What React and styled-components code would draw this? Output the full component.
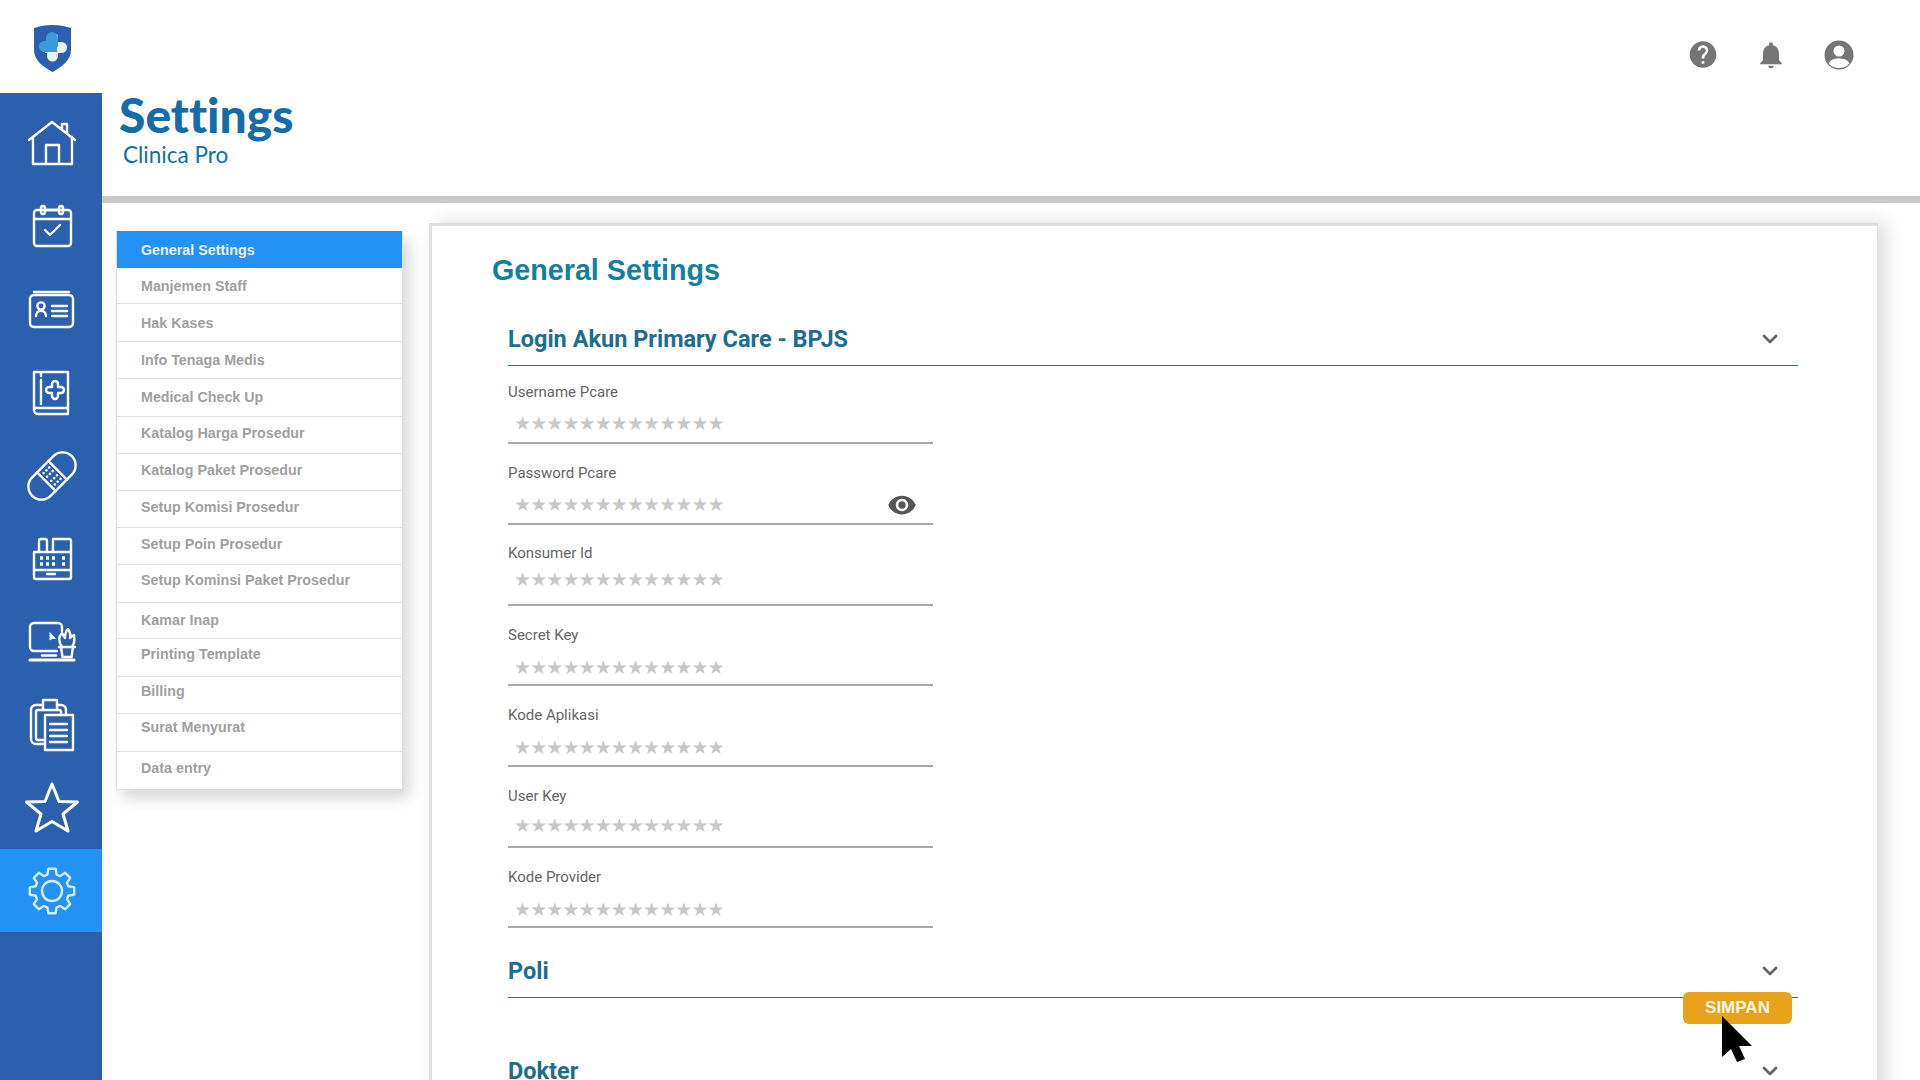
import React from "react";
import styled, { createGlobalStyle } from "styled-components";
import { MdHelp, MdNotifications, MdVisibility } from "react-icons/md";

const GlobalStyle = createGlobalStyle`
  html, body {
    margin: 0;
    padding: 0;
    height: 1080px;
    overflow: hidden;
    background: #ffffff;
  }
  * { box-sizing: border-box; }
`;

const Page = styled.div`
  position: relative;
  width: 1920px;
  height: 1080px;
  overflow: hidden;
  display: flex;
  flex-direction: column;
  font-family: "Liberation Sans", Arial, sans-serif;
`;

const TopBar = styled.header`
  height: 93px;
  flex: none;
  display: flex;
  align-items: center;
  justify-content: space-between;
  padding: 0 65px 0 34px;
`;

const LogoMark = styled.svg`
  width: 37px;
  height: 47px;
  display: block;
  margin-top: 4px;
`;

const TopIcons = styled.div`
  display: flex;
  align-items: center;
  gap: 36px;
  color: #757575;
  padding-top: 16px;
`;

const TopIcon = styled.span`
  width: 32px;
  height: 32px;
  display: flex;
  align-items: center;
  justify-content: center;
`;

const Body = styled.div`
  flex: 1;
  display: flex;
  min-height: 0;
`;

const Sidebar = styled.nav`
  width: 102px;
  flex: none;
  background: #2a60ae;
  padding-top: 9px;
`;

const NavItem = styled.div`
  height: 83px;
  display: flex;
  align-items: center;
  justify-content: center;
  padding: 1px 0 0 1px;
  background: ${(p) => (p.$active ? "#2491f5" : "transparent")};
`;

const NavSvg = styled.svg.attrs({ viewBox: "0 0 64 64" })`
  width: 64px;
  height: 64px;
  display: block;
  fill: none;
  stroke: ${(p) => p.$tint || "#ffffff"};
  stroke-width: 2.4;
  stroke-linejoin: round;
  stroke-linecap: round;
`;

const Main = styled.main`
  flex: 1;
  min-width: 0;
  display: flex;
  flex-direction: column;
`;

const PageHead = styled.div`
  height: 103px;
  flex: none;
  padding: 0 0 0 17px;
`;

const PageTitle = styled.h1`
  margin: -2px 0 0;
  font-family: Lato, sans-serif;
  font-weight: 900;
  font-size: 48px;
  line-height: 48px;
  font-variant-ligatures: none;
  color: #156ca8;
`;

const PageSub = styled.div`
  margin: 3px 0 0 4px;
  font-family: Lato, sans-serif;
  font-weight: 400;
  font-size: 22.5px;
  line-height: 26px;
  color: #156ca8;
`;

const Rule = styled.div`
  height: 7px;
  flex: none;
  background: #c9c9c9;
`;

const Content = styled.div`
  flex: 1;
  min-height: 0;
  display: flex;
  align-items: flex-start;
  padding: 20px 0 0 14px;
  gap: 26px;
`;

const Menu = styled.ul`
  width: 287px;
  flex: none;
  margin: 8px 0 0;
  padding: 0;
  list-style: none;
  border: 1px solid #dedede;
  border-top: none;
  box-shadow: 6px 8px 14px rgba(0, 0, 0, 0.16);
  background: #ffffff;
`;

const MenuItem = styled.li`
  height: ${(p) => p.$h || 37}px;
  padding: 0 0 ${(p) => p.$lift || 0}px 24px;
  display: flex;
  align-items: center;
  font-size: 14.3px;
  font-weight: 700;
  color: ${(p) => (p.$active ? "#e9f4ff" : "#a0a0a0")};
  background: ${(p) => (p.$active ? "#2491f5" : "transparent")};
  border-bottom: ${(p) => (p.$active || p.$last ? "none" : "1px solid #e2e2e2")};
`;

const Panel = styled.section`
  width: 1449px;
  height: 900px;
  flex: none;
  padding: 24px 79px 0 60px;
  border: 3px solid #e0e0e0;
  border-right: 1px solid #e0e0e0;
  border-bottom: none;
  box-shadow: 8px 0 18px rgba(0, 0, 0, 0.14);
  background: #ffffff;
`;

const PanelTitle = styled.h2`
  margin: 0;
  font-size: 28.7px;
  line-height: 40px;
  font-weight: 700;
  color: #12809e;
`;

const Section = styled.div`
  margin: ${(p) => p.$top}px 0 0 16px;
`;

const SectionHead = styled.div`
  height: 53px;
  display: flex;
  align-items: center;
  justify-content: space-between;
  padding-right: 20px;
  border-bottom: 1px solid #2a6f94;
  font-family: Roboto, sans-serif;
  font-size: 23.5px;
  font-weight: 700;
  color: #1d6d91;
`;

const Chevron = styled.svg.attrs({ viewBox: "0 0 16 10" })`
  width: 16px;
  height: 10px;
  fill: none;
  stroke: #666666;
  stroke-width: 2.8;
  stroke-linecap: round;
  stroke-linejoin: round;
`;

const Field = styled.div`
  position: relative;
  width: 425px;
  height: ${(p) => p.$h || 81}px;
  display: flex;
  flex-direction: column;
  justify-content: space-between;
  padding-top: ${(p) => p.$pad || 19}px;
  border-bottom: 2px solid #a8a8a8;
`;

const Label = styled.label`
  font-family: Roboto, sans-serif;
  font-size: 15px;
  line-height: 20px;
  color: #666666;
`;

const Mask = styled.div`
  font-family: "DejaVu Sans", sans-serif;
  font-size: 19px;
  line-height: 20px;
  letter-spacing: -0.9px;
  padding: 0 0 ${(p) => p.$up}px 6px;
  color: #c8c8c8;
  white-space: nowrap;
`;

const EyeButton = styled.span`
  position: absolute;
  right: 16px;
  bottom: 3px;
  display: flex;
  color: #555555;
`;

const SaveButton = styled.button`
  position: absolute;
  left: 1683px;
  top: 992px;
  width: 109px;
  height: 32px;
  border: none;
  border-radius: 6px;
  background: #e8a21c;
  color: #fff7e6;
  font-family: "Liberation Sans", Arial, sans-serif;
  font-size: 17px;
  font-weight: 700;
`;

const Pointer = styled.svg`
  position: absolute;
  left: 1720px;
  top: 1015px;
  width: 36px;
  height: 48px;
`;

const menuItems = [
  { label: "General Settings", active: true },
  { label: "Manjemen Staff", h: 36 },
  { label: "Hak Kases", h: 38 },
  { label: "Info Tenaga Medis" },
  { label: "Medical Check Up", h: 38, lift: 2 },
  { label: "Katalog Harga Prosedur", lift: 4 },
  { label: "Katalog Paket Prosedur", lift: 5 },
  { label: "Setup Komisi Prosedur", lift: 5 },
  { label: "Setup Poin Prosedur", lift: 5 },
  { label: "Setup Kominsi Paket Prosedur", h: 38, lift: 8 },
  { label: "Kamar Inap", h: 36, lift: 2 },
  { label: "Printing Template", h: 38, lift: 8 },
  { label: "Billing", lift: 9 },
  { label: "Surat Menyurat", h: 38, lift: 12 },
  { label: "Data entry", last: true, lift: 5 },
];

const fields = [
  { label: "Username Pcare", h: 78, pad: 16, up: 9 },
  { label: "Password Pcare", up: 9, eye: true },
  { label: "Konsumer Id", pad: 18, up: 15 },
  { label: "Secret Key", h: 80, up: 7 },
  { label: "Kode Aplikasi", h: 81, up: 8 },
  { label: "User Key", up: 11 },
  { label: "Kode Provider", h: 80, up: 7 },
];

const stars = "★★★★★★★★★★★★★";

function gearPath(cx, cy) {
  const teeth = 8;
  const pts = [];
  for (let i = 0; i < teeth; i++) {
    const a = (i * 2 * Math.PI) / teeth - Math.PI / 2;
    const step = (2 * Math.PI) / teeth;
    [[-0.3, 17], [-0.17, 22.5], [0.17, 22.5], [0.3, 17]].forEach(([t, r]) => {
      const b = a + t * step * 1.2;
      pts.push(`${(cx + r * Math.cos(b)).toFixed(1)} ${(cy + r * Math.sin(b)).toFixed(1)}`);
    });
  }
  return "M" + pts.join("L") + "Z";
}

const navIcons = [
  <NavSvg key="home">
    <path d="M9 28 32 10l23 18M13 25v27h39V25M26 52V33h13v19M42 17v-5h5v9" />
  </NavSvg>,
  <NavSvg key="calendar">
    <rect x="14" y="15" width="37" height="36" rx="3" />
    <path d="M14 24h37M26 15h12" />
    <rect x="21" y="11" width="4" height="8" rx="2" />
    <rect x="39" y="11" width="4" height="8" rx="2" />
    <path d="m25 35 5 5 10-10" />
  </NavSvg>,
  <NavSvg key="card">
    <rect x="10" y="17" width="43" height="32" rx="4" />
    <path d="M14 14h35" />
    <circle cx="21" cy="28" r="3.6" />
    <path d="M16 38c0-7 10-7 10 0M32 28h15M32 33h15M32 38h15" />
  </NavSvg>,
  <NavSvg key="book">
    <path d="M48 11H14v38a4 4 0 0 0 4 4h30zM48 47H18a3 3 0 0 0-4 2M21 11v4M21 19v24" />
    <path d="M32 23a3 3 0 0 1 6 0v3h3a3 3 0 0 1 0 6h-3v3a3 3 0 0 1-6 0v-3h-3a3 3 0 0 1 0-6h3z" />
  </NavSvg>,
  <NavSvg key="bandage">
    <g transform="rotate(-45 32 32)">
      <rect x="4" y="19" width="56" height="26" rx="13" />
      <path d="M24 19v26M40 19v26" />
      <path d="M28 24h.1M32 24h.1M36 24h.1M28 29h.1M32 29h.1M36 29h.1M28 35h.1M32 35h.1M36 35h.1M28 40h.1M32 40h.1M36 40h.1" strokeWidth="2.6" />
    </g>
  </NavSvg>,
  <NavSvg key="register">
    <path d="M14 25h37v25a2 2 0 0 1-2 2H16a2 2 0 0 1-2-2zM14 43h37M27 47h8" />
    <path d="M19 25v-11a2 2 0 0 1 2-2h4a2 2 0 0 1 2 2v11M33 25v-13h16a2 2 0 0 1 2 2v11" />
    <path d="M20 31h3M26 31h3M32 31h3M42 31h3M20 37h3M26 37h3M32 37h3M42 37h3" strokeWidth="3.6" strokeLinecap="butt" />
  </NavSvg>,
  <NavSvg key="laptop">
    <path d="M37 41H14a4 4 0 0 1-4-4V17a4 4 0 0 1 4-4h24a4 4 0 0 1 4 4v4" />
    <path d="M10 50h44" strokeWidth="3.2" />
    <path d="M22 45.500h14" />
    <path d="M39 37h16M41 37l1.500 10h9l1.500-10" />
    <path d="M42 37c-4-6-3-11 0-14 1 2 2 3 3 5 0-5 2-8 3-9 2 3 3 6 2 9 1-1 2-2 4-3 1 5 0 9-2 12" />
    <path d="m30 23 0 7 2-1.500 3 0z" fill="#ffffff" strokeWidth="1" />
  </NavSvg>,
  <NavSvg key="clipboard">
    <path d="M25 51h-9a5 5 0 0 1-5-5V17a5 5 0 0 1 5-5h7M37 12h4a5 5 0 0 1 5 5v5" />
    <path d="M25 47h-7a2 2 0 0 1-2-2V19a2 2 0 0 1 2-2h5M37 17h2a2 2 0 0 1 2 2v3" />
    <rect x="23" y="7" width="14" height="10" />
    <rect x="25" y="22" width="28" height="35" />
    <path d="M30 31h17M30 37h17M30 43h17M30 49h17" />
  </NavSvg>,
  <NavSvg key="star" style={{ strokeWidth: 3 }}>
    <path d="m32 8 7 17.500 18.500 .5-14.500 12 5 17-16-9.500-16 9.500 5-17L6.500 26l18.500-.5z" />
  </NavSvg>,
  <NavSvg key="gear" $tint="#d6ecff">
    <path d={gearPath(32, 32)} />
    <circle cx="32" cy="32" r="10" />
  </NavSvg>,
];

function SectionTitle({ children, top }) {
  return (
    <Section $top={top}>
      <SectionHead>
        {children}
        <Chevron>
          <path d="m2 2 6 6 6-6" />
        </Chevron>
      </SectionHead>
    </Section>
  );
}

export default function App() {
  return (
    <Page>
      <GlobalStyle />
      <TopBar>
        <LogoMark viewBox="0 0 37 47">
          <path d="M0 3C6 1 12 0 18.500 0S31 1 37 3v22c0 10-9 17-18.500 22C9 42 0 35 0 25z" fill="#2a60ae" />
          <path d="M11 20h7V9h5a6 6 0 0 1 1 5v3h3.500a5.500 5.500 0 0 1 0 11H24v3a5.500 5.500 0 0 1-11 0v-3h-2z" fill="#e8f0f8" />
          <path d="M12 16v-3a6 6 0 0 1 12 0v9h-1v5H10.500a5.500 5.500 0 0 1 0-11z" fill="#3d9ad8" />
        </LogoMark>
        <TopIcons>
          <TopIcon><MdHelp size={37} /></TopIcon>
          <TopIcon><MdNotifications size={38} /></TopIcon>
          <TopIcon>
            <svg width="30" height="30" viewBox="0 0 30 30">
              <circle cx="15" cy="15" r="14.500" fill="#757575" />
              <circle cx="15" cy="11" r="5.500" fill="#ffffff" />
              <path d="M4.500 23.500C7 19 11 18.500 15 18.500s8 .5 10.500 5C23 26.500 19 28 15 28s-8-1.500-10.500-4.500z" fill="#ffffff" />
            </svg>
          </TopIcon>
        </TopIcons>
      </TopBar>
      <Body>
        <Sidebar>
          {navIcons.map((icon, i) => (
            <NavItem key={i} $active={i === 9}>{icon}</NavItem>
          ))}
        </Sidebar>
        <Main>
          <PageHead>
            <PageTitle>Settings</PageTitle>
            <PageSub>Clinica Pro</PageSub>
          </PageHead>
          <Rule />
          <Content>
            <Menu>
              {menuItems.map((item) => (
                <MenuItem
                  key={item.label}
                  $active={item.active}
                  $last={item.last}
                  $h={item.h}
                  $lift={item.lift}
                >
                  {item.label}
                </MenuItem>
              ))}
            </Menu>
            <Panel>
              <PanelTitle>General Settings</PanelTitle>
              <SectionTitle top={23}>Login Akun Primary Care - BPJS</SectionTitle>
              <Section $top={0}>
                {fields.map((f) => (
                  <Field key={f.label} $h={f.h} $pad={f.pad}>
                    <Label>{f.label}</Label>
                    <Mask $up={f.up}>{stars}</Mask>
                    {f.eye && (
                      <EyeButton><MdVisibility size={30} /></EyeButton>
                    )}
                  </Field>
                ))}
              </Section>
              <SectionTitle top={17}>Poli</SectionTitle>
              <SectionTitle top={47}>Dokter</SectionTitle>
            </Panel>
          </Content>
        </Main>
      </Body>
      <SaveButton>SIMPAN</SaveButton>
      <Pointer viewBox="0 0 36 48">
        <path d="M2 1v41l9-8 6 13 8-3-6-13h13z" fill="#000000" />
      </Pointer>
    </Page>
  );
}
